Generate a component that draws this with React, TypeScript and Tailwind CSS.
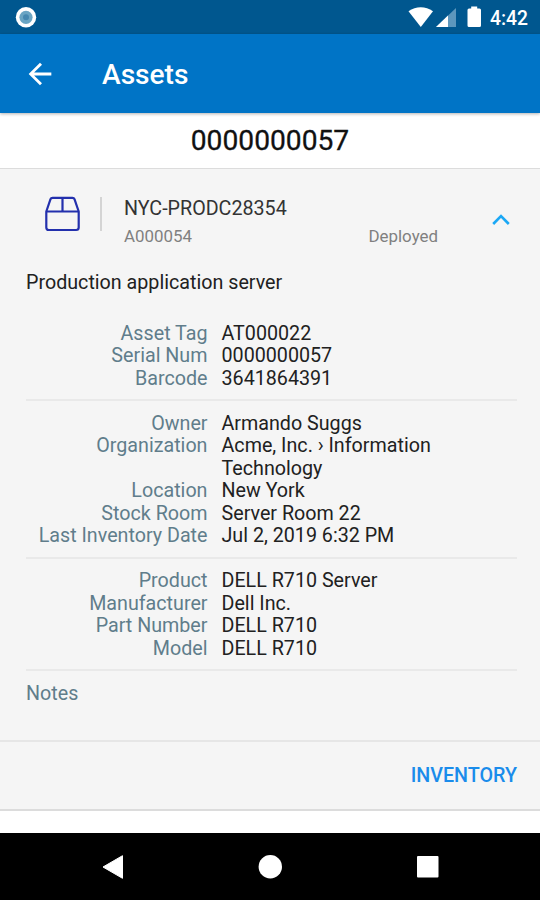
type Field = {
  label: string;
  value: string;
};

const groups: Field[][] = [
  [
    { label: "Asset Tag", value: "AT000022" },
    { label: "Serial Num", value: "0000000057" },
    { label: "Barcode", value: "3641864391" },
  ],
  [
    { label: "Owner", value: "Armando Suggs" },
    { label: "Organization", value: "Acme, Inc. › Information Technology" },
    { label: "Location", value: "New York" },
    { label: "Stock Room", value: "Server Room 22" },
    { label: "Last Inventory Date", value: "Jul 2, 2019 6:32 PM" },
  ],
  [
    { label: "Product", value: "DELL R710 Server" },
    { label: "Manufacturer", value: "Dell Inc." },
    { label: "Part Number", value: "DELL R710" },
    { label: "Model", value: "DELL R710" },
  ],
];

const StatusBar = () => (
  <div className="h-[34px] shrink-0 bg-[#00578f] flex items-center justify-between pl-[15px] pr-[12px]">
    <svg width="22" height="22" viewBox="0 0 22 22">
      <circle cx="11" cy="11.300" r="10.2" fill="#fff" />
      <circle cx="11" cy="11.300" r="6.6" fill="#6aa5c3" />
      <circle cx="11" cy="11.300" r="3" fill="#4588b0" />
    </svg>
    <div className="flex items-center">
      <svg width="74" height="24" viewBox="0 0 74 24">
        <path d="M0.5 6.2C8 0.8 17.500 0.800 25 6.200L12.800 22Z" fill="#fff" />
        <path d="M28 22L48 3V22Z" fill="#5d97bd" />
        <path d="M28 22L40 10.600V22Z" fill="#fff" />
        <path
          d="M63.200 1.500H69.200V3.500H71.500Q73 3.500 73 5V20.500Q73 22 71.500 22H61Q59.500 22 59.500 20.500V5Q59.500 3.500 61 3.500H63.200Z"
          fill="#fff"
        />
      </svg>
      <span className="ml-[8px] mt-[4px] text-[19.3px] leading-6 font-medium text-white">
        4:42
      </span>
    </div>
  </div>
);

const AppBar = () => (
  <div className="h-[79px] shrink-0 bg-[#0074c6] flex items-center pl-[23px] shadow-[0_1px_3px_rgba(0,0,0,0.3)] z-10">
    <button aria-label="Back">
      <svg width="34" height="34" viewBox="0 0 24 24" fill="#fff">
        <path d="M20 11H7.830l5.590-5.590L12 4l-8 8 8 8 1.410-1.410L7.830 13H20v-2z" />
      </svg>
    </button>
    <h1 className="ml-[45px] pt-[3px] text-[28.1px] font-medium text-white">
      Assets
    </h1>
  </div>
);

const AssetHeader = () => (
  <div className="flex h-[90px] shrink-0 items-start pl-11 pr-[30px] pt-[27px]">
    <svg
      width="37"
      height="36"
      viewBox="0 0 37 36"
      fill="none"
      stroke="#2330ad"
      strokeWidth="2.200"
      strokeLinejoin="round"
    >
      <path d="M2.300 15.500L6.500 3.200Q7 1.800 8.500 1.800H28.500Q30 1.800 30.500 3.200L34.700 15.500V31.500Q34.700 34 32.200 34H4.800Q2.300 34 2.300 31.500Z" />
      <path d="M2.300 15.500H34.700M18.500 1.800V15.500" />
    </svg>
    <div className="ml-[19px] mt-[1px] h-[34px] w-[2px] bg-[#d4d4d4]" />
    <div className="ml-[22px] w-[314px]">
      <div className="pt-px text-[19.7px] leading-6 text-[#333]">
        NYC-PRODC28354
      </div>
      <div className="mt-[5px] flex justify-between text-[16.9px] leading-5 text-[#808080]">
        <span>A000054</span>
        <span>Deployed</span>
      </div>
    </div>
    <svg
      className="ml-auto mt-[18px]"
      width="18"
      height="12"
      viewBox="0 0 18 12"
      fill="none"
      stroke="#1ba8f5"
      strokeWidth="2.600"
    >
      <path d="M1.200 10L9 2.200L16.800 10" />
    </svg>
  </div>
);

const FieldRow = ({ label, value }: Field) => (
  <div className="flex">
    <div className="w-[181.5px] shrink-0 text-right text-[#607d8b]">
      {label}
    </div>
    <div className="ml-[14px] w-[240px] text-[#212121]">{value}</div>
  </div>
);

const NavBar = () => (
  <div className="h-[67px] shrink-0 bg-black flex items-center justify-center">
    <svg width="540" height="67" viewBox="0 0 540 67" fill="#fff">
      <path
        d="M103 34L122.500 22.700V45.300Z"
        stroke="#fff"
        strokeWidth="1"
        strokeLinejoin="round"
      />
      <circle cx="270.300" cy="33.700" r="11.700" />
      <rect x="417" y="23" width="21.500" height="21.500" rx="1" />
    </svg>
  </div>
);

const App = () => {
  return (
    <div className="flex h-[900px] w-[540px] flex-col overflow-hidden bg-white font-[Roboto,sans-serif]">
      <StatusBar />
      <AppBar />
      <div className="h-[55px] shrink-0 text-center text-[28.2px] leading-[55px] text-[#111] [-webkit-text-stroke:0.3px_#111]">
        0000000057
      </div>
      <div className="flex h-[643px] shrink-0 flex-col border-t border-b-2 border-[#dcdcdc] bg-[#f5f5f5]">
        <AssetHeader />
        <div className="h-[481px] shrink-0 pl-[26px] pr-[23px] text-[19.7px] leading-[22.500px]">
          <div className="pt-[13px] text-[#212121]">
            Production application server
          </div>
          <div className="pt-[16.500px]">
            {groups.map((group) => (
              <div
                key={group[0].label}
                className="border-b-2 border-[#e9e9e9] pt-[11.500px] pb-[9px]"
              >
                {group.map((field) => (
                  <FieldRow key={field.label} {...field} />
                ))}
              </div>
            ))}
          </div>
          <div className="pt-[12px] text-[#607d8b]">Notes</div>
        </div>
        <div className="flex h-[69px] shrink-0 items-center justify-end border-t-2 border-[#e6e6e6] pr-[23px]">
          <button className="pt-px text-[19.7px] font-medium text-[#1a8ceb]">
            INVENTORY
          </button>
        </div>
      </div>
      <div className="h-[22px] shrink-0" />
      <NavBar />
    </div>
  );
};

export default App;
